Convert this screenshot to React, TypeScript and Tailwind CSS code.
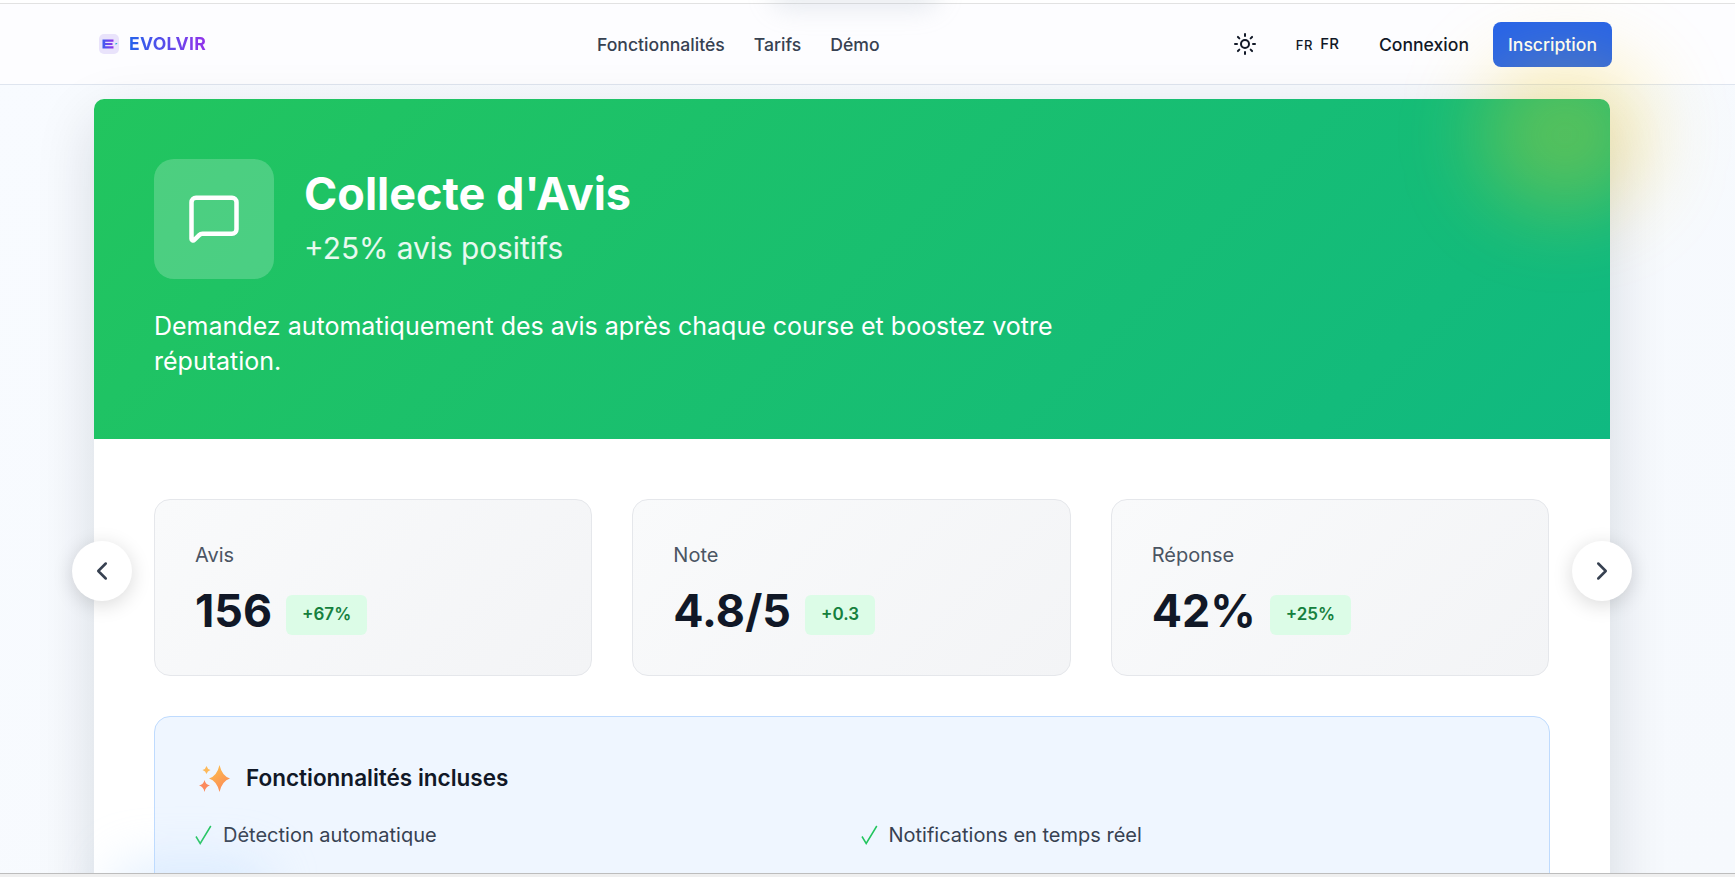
import { ChevronLeft, ChevronRight, MessageSquare, Sun } from "lucide-react";

const stats = [
  { label: "Avis", value: "156", delta: "+67%" },
  { label: "Note", value: "4.8/5", delta: "+0.3" },
  { label: "Réponse", value: "42%", delta: "+25%" },
];

function LogoMark() {
  return (
    <svg width="20" height="20" viewBox="0 0 20 20" className="shrink-0">
      <defs>
        <linearGradient id="logoE" x1="0" y1="0" x2="1" y2="0">
          <stop offset="0" stopColor="#3b5cf0" />
          <stop offset="1" stopColor="#9333ea" />
        </linearGradient>
      </defs>
      <rect x="0" y="0" width="20" height="20" rx="5" fill="#e9e3fb" />
      <path d="M3.5 5.5h11v2.2H6.2v1.3h7.3v2H6.2v1.3h8.3v2.2h-11z" fill="url(#logoE)" />
      <path d="M16.5 9h2l-1 1.2-1 .6z" fill="#22a7d8" />
    </svg>
  );
}

function Sparkles() {
  return (
    <svg width="31" height="27" viewBox="0 0 31 27" className="ml-[4px] shrink-0">
      <defs>
        <linearGradient id="spark" x1="0.2" y1="0" x2="0.8" y2="1">
          <stop offset="0" stopColor="#fdc04d" />
          <stop offset="1" stopColor="#fb8658" />
        </linearGradient>
      </defs>
      <path d="M20.5 0Q23 11 31 13.500Q23 16 20.500 27Q18 16 10 13.500Q18 11 20.500 0z" fill="url(#spark)" />
      <path d="M7.500 1Q8.300 4.200 11.500 5Q8.300 5.800 7.500 9Q6.700 5.800 3.500 5Q6.700 4.200 7.500 1z" fill="#fdb95a" />
      <path d="M5.500 15Q6.500 19.500 11 20.500Q6.500 21.500 5.500 27Q4.500 21.500 0 20.500Q4.500 19.500 5.500 15z" fill="#fb8a5e" />
    </svg>
  );
}

function Tick() {
  return (
    <svg width="17" height="20" viewBox="0 0 17 20" className="shrink-0">
      <path d="M1 11.500L5.200 18.500L15.800 1" fill="none" stroke="#22c55e" strokeWidth="1.5" />
    </svg>
  );
}

function Feature({ text }: { text: string }) {
  return (
    <div className="flex items-center gap-[11px] text-[20px] leading-[30px] text-[#374151]">
      <Tick />
      <span>{text}</span>
    </div>
  );
}

export default function App() {
  return (
    <div className="relative h-[877px] overflow-hidden bg-[linear-gradient(135deg,#f8fbff_0%,#f6f9fd_100%)] font-['Inter',sans-serif]">
      <div className="h-[3px] bg-white" />
      <nav className="relative flex h-[82px] items-center border-y border-t-[#e2e2e2] border-b-[#dfe5ef] bg-[#fdfdff] pl-[99px] pr-[123px]">
        <div className="flex items-center gap-[10px]">
          <LogoMark />
          <span className="bg-[linear-gradient(90deg,#2563eb,#9333ea)] bg-clip-text pt-[1px] text-[17.6px] font-bold tracking-[0.3px] text-transparent">
            EVOLVIR
          </span>
        </div>
        <div className="ml-[391px] mt-[2px] flex items-center gap-[29px] text-[17.6px] font-medium text-[#374151]">
          <span>Fonctionnalités</span>
          <span>Tarifs</span>
          <span>Démo</span>
        </div>
        <div className="ml-auto flex items-center">
          <Sun size={24} strokeWidth={2} className="text-[#111827]" />
          <div className="ml-[39px] flex items-center gap-[7px] font-medium text-[#111827]">
            <span className="mt-[3px] text-[13px] tracking-[0.8px]">FR</span>
            <span className="text-[15px] leading-[18px]">FR</span>
          </div>
          <span className="ml-[40px] mt-[2px] text-[17.6px] font-medium text-[#111827]">Connexion</span>
          <button className="ml-[24px] h-[45px] w-[119px] rounded-lg bg-[#2563eb] pt-[2px] text-[17.6px] font-medium text-white">
            Inscription
          </button>
        </div>
      </nav>

      <main className="relative ml-[94px] mt-[14px] w-[1516px] rounded-t-[10px] bg-white shadow-[0_20px_60px_rgba(15,23,42,0.14)]">
        <header className="h-[340px] rounded-t-[10px] bg-[linear-gradient(135deg,#22c55e,#10b981)] p-[60px] text-white">
          <div className="flex items-center gap-[30px]">
            <div className="flex h-[120px] w-[120px] items-center justify-center rounded-[20px] bg-white/20">
              <MessageSquare size={54} strokeWidth={2} className="mb-[3px]" />
            </div>
            <div>
              <h1 className="mt-[-6px] text-[45px] font-bold leading-[54px]">Collecte d'Avis</h1>
              <p className="mt-[9px] text-[29.8px] leading-[36px] text-white/90">+25% avis positifs</p>
            </div>
          </div>
          <p className="mt-[30px] max-w-[960px] text-[25px] leading-[35px]">
            Demandez automatiquement des avis après chaque course et boostez votre réputation.
          </p>
        </header>

        <section className="h-[500px] pl-[60px] pr-[61px] pt-[60px]">
          <div className="grid grid-cols-3 gap-[40px]">
            {stats.map((s) => (
              <div
                key={s.label}
                className="h-[177px] rounded-2xl border border-[#e5e7eb] bg-[linear-gradient(135deg,#f9fafb,#f3f4f6)] px-[40px] pt-[43px]"
              >
                <div className="text-[20px] leading-[24px] text-[#4b5563]">{s.label}</div>
                <div className="mt-[14px] flex items-center gap-[14px]">
                  <span className="text-[44.8px] font-bold leading-[60px] text-[#111827]">{s.value}</span>
                  <span className="mt-[8px] flex h-[40px] items-center rounded-md bg-[#dcfce7] px-[16px] text-[17px] font-semibold text-[#15803d]">
                    {s.delta}
                  </span>
                </div>
              </div>
            ))}
          </div>

          <div className="mr-[-1px] mt-[40px] h-[300px] rounded-2xl border border-[#bfdbfe] bg-[#eff6ff] px-[40px] pt-[45px]">
            <div className="flex items-center gap-[16px]">
              <Sparkles />
              <h2 className="text-[22.5px] font-semibold leading-[32px] text-[#111827]">Fonctionnalités incluses</h2>
            </div>
            <div className="mt-[26px] grid grid-cols-2 gap-[17px]">
              <Feature text="Détection automatique" />
              <Feature text="Notifications en temps réel" />
            </div>
          </div>
        </section>
      </main>

      {/* decorative blurred blobs */}
      <div className="pointer-events-none absolute left-[1480px] top-[60px] h-[150px] w-[170px] rounded-full bg-[#facc15]/30 blur-[40px]" />
      <div className="pointer-events-none absolute left-[770px] top-[-30px] h-[40px] w-[170px] rounded-full bg-[#94a3b8]/20 blur-[12px]" />
      <div className="pointer-events-none absolute left-[110px] top-[860px] h-[60px] w-[160px] rounded-full bg-[#bfdbfe]/40 blur-[24px]" />

      <button className="absolute left-[72px] top-[541px] flex h-[60px] w-[60px] items-center justify-center rounded-full bg-white text-[#374151] shadow-[0_4px_20px_rgba(0,0,0,0.15)]">
        <ChevronLeft size={30} strokeWidth={2} />
      </button>
      <button className="absolute left-[1572px] top-[541px] flex h-[60px] w-[60px] items-center justify-center rounded-full bg-white text-[#374151] shadow-[0_4px_20px_rgba(0,0,0,0.15)]">
        <ChevronRight size={30} strokeWidth={2} />
      </button>

      <div className="absolute bottom-0 left-0 right-0 h-[4px] border-t border-[#bdbdbd] bg-[#efefef]" />
    </div>
  );
}
